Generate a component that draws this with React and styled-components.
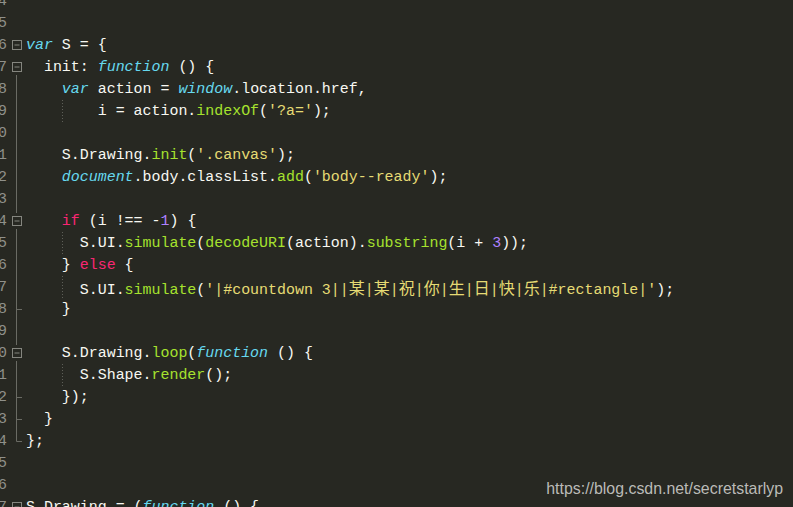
import React from 'react';
import styled, { createGlobalStyle } from 'styled-components';

const Global = createGlobalStyle`
  html, body { margin: 0; padding: 0; background: #272822; }
  body { overflow: hidden; }
`;

const COLORS = {
  t: '#f8f8f2',
  k: '#66d9ef',
  f: '#a6e22e',
  s: '#e6db74',
  n: '#ae81ff',
  p: '#f92672',
};

// [lineNo, fold, guide, tokens]
const LINES = [
  [4, 'none', false, []],
  [5, 'none', false, []],
  [6, 'box', false, [['k', 'var'], ['t', ' S = {']]],
  [7, 'boxb', false, [['t', '  init: '], ['k', 'function'], ['t', ' () {']]],
  [8, 'line', false, [['t', '    '], ['k', 'var'], ['t', ' action = '], ['k', 'window'], ['t', '.location.href,']]],
  [9, 'line', true, [['t', '        i = action.'], ['f', 'indexOf'], ['t', '('], ['s', "'?a='"], ['t', ');']]],
  [10, 'line', false, []],
  [11, 'line', false, [['t', '    S.Drawing.'], ['f', 'init'], ['t', '('], ['s', "'.canvas'"], ['t', ');']]],
  [12, 'line', false, [['t', '    '], ['k', 'document'], ['t', '.body.classList.'], ['f', 'add'], ['t', '('], ['s', "'body--ready'"], ['t', ');']]],
  [13, 'line', false, []],
  [14, 'boxtb', false, [['t', '    '], ['p', 'if'], ['t', ' (i !== -'], ['n', '1'], ['t', ') {']]],
  [15, 'line', true, [['t', '      S.UI.'], ['f', 'simulate'], ['t', '('], ['f', 'decodeURI'], ['t', '(action).'], ['f', 'substring'], ['t', '(i + '], ['n', '3'], ['t', '));']]],
  [16, 'line', false, [['t', '    } '], ['p', 'else'], ['t', ' {']]],
  [17, 'line', true, [['t', '      S.UI.'], ['f', 'simulate'], ['t', '('], ['s', "'|#countdown 3||某|某|祝|你|生|日|快|乐|#rectangle|'"], ['t', ');']]],
  [18, 'end', false, [['t', '    }']]],
  [19, 'line', false, []],
  [20, 'boxtb', false, [['t', '    S.Drawing.'], ['f', 'loop'], ['t', '('], ['k', 'function'], ['t', ' () {']]],
  [21, 'line', true, [['t', '      S.Shape.'], ['f', 'render'], ['t', '();']]],
  [22, 'end', false, [['t', '    });']]],
  [23, 'end', false, [['t', '  }']]],
  [24, 'last', false, [['t', '};']]],
  [25, 'none', false, []],
  [26, 'none', false, []],
  [27, 'box', false, [['t', 'S.Drawing = ('], ['k', 'function'], ['t', ' () {']]],
];

const Page = styled.div`
  position: relative;
  width: 793px;
  height: 507px;
  overflow: hidden;
  background: #272822;
`;

const Editor = styled.div`
  display: flex;
  flex-direction: column;
  margin-top: -10px;
  margin-left: -11px;
  font-family: "Liberation Mono", "DejaVu Sans Mono", monospace;
  font-size: 14.95px;
`;

const Row = styled.div`
  display: flex;
  align-items: center;
  height: 22px;
  line-height: 22px;
  white-space: pre;
`;

const LineNo = styled.div`
  width: 18px;
  text-align: right;
  color: #8f908a;
`;

const FoldCell = styled.svg`
  width: 19px;
  height: 22px;
  flex: none;
`;

const Code = styled.div`
  flex: 1;
  height: 22px;
  color: ${COLORS.t};
  background-image: ${(p) =>
    p.$guide ? 'repeating-linear-gradient(to bottom, #5e5f58 0 1px, transparent 1px 3px)' : 'none'};
  background-size: 1px 100%;
  background-position: 36px 0;
  background-repeat: no-repeat;
`;

const Tok = styled.span`
  color: ${(p) => COLORS[p.$kind]};
  font-style: ${(p) => (p.$kind === 'k' ? 'italic' : 'normal')};
`;

const Cjk = styled.span`
  font-family: "Noto Sans CJK SC", sans-serif;
  font-size: 16px;
  line-height: 22px;
`;

const Watermark = styled.div`
  position: absolute;
  right: 10px;
  bottom: 9px;
  font-family: "Liberation Sans", Arial, sans-serif;
  font-size: 15.9px;
  color: rgba(215, 215, 212, 0.85);
`;

function Fold({ kind }) {
  const line = '#6a6b64';
  const box = '#85867f';
  return (
    <FoldCell viewBox="0 0 19 22">
      {(kind === 'line' || kind === 'end') && <line x1="9.5" y1="0" x2="9.5" y2="22" stroke={line} />}
      {kind === 'last' && <line x1="9.5" y1="0" x2="9.5" y2="11.5" stroke={line} />}
      {(kind === 'end' || kind === 'last') && <line x1="9.5" y1="11.5" x2="15" y2="11.5" stroke={line} />}
      {kind.startsWith('box') && (
        <g>
          <rect x="5.5" y="6.5" width="9" height="9" fill="none" stroke={box} />
          <line x1="7.5" y1="11" x2="12.5" y2="11" stroke={box} />
        </g>
      )}
      {kind === 'boxtb' && <line x1="9.5" y1="0" x2="9.5" y2="3" stroke={line} />}
      {(kind === 'boxb' || kind === 'boxtb') && <line x1="9.5" y1="19" x2="9.5" y2="22" stroke={line} />}
    </FoldCell>
  );
}

function renderText(text) {
  const parts = text.split(/([\u4e00-\u9fff]+)/);
  return parts.map((part, i) =>
    /[\u4e00-\u9fff]/.test(part) ? <Cjk key={i}>{part}</Cjk> : part
  );
}

export default function App() {
  return (
    <Page>
      <Global />
      <Editor>
        {LINES.map(([no, fold, guide, tokens]) => (
          <Row key={no}>
            <LineNo>{no}</LineNo>
            <Fold kind={fold} />
            <Code $guide={guide}>
              {tokens.map(([kind, text], i) => (
                <Tok key={i} $kind={kind}>{renderText(text)}</Tok>
              ))}
            </Code>
          </Row>
        ))}
      </Editor>
      <Watermark>https://blog.csdn.net/secretstarlyp</Watermark>
    </Page>
  );
}
